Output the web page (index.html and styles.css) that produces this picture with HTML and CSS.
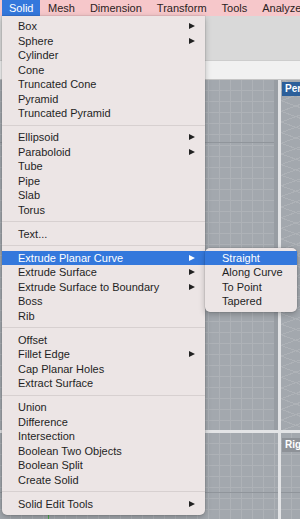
FILE: index.html
```html
<!DOCTYPE html>
<html lang="en">
<head>
  <meta charset="UTF-8" />
  <meta name="viewport" content="width=device-width, initial-scale=1" />
  <title>Solid menu</title>
  <link rel="stylesheet" href="styles.css">
</head>
<body>
  <div class="app">
    <div class="menubar">
      <span class="menu-title open">Solid</span>
      <span class="menu-title">Mesh</span>
      <span class="menu-title">Dimension</span>
      <span class="menu-title">Transform</span>
      <span class="menu-title">Tools</span>
      <span class="menu-title">Analyze</span>
    </div>
    <div class="toolbar"></div>
    <div class="tabstrip"></div>

    <div class="viewports">
      <div class="viewport flat"></div>
      <div class="viewport persp">
        <span class="vp-label active">Perspective</span>
      </div>
      <div class="viewport flat lower">
        <div class="axis-y"></div>
      </div>
      <div class="viewport flat lower">
        <span class="vp-label">Right</span>
      </div>
    </div>

    <div class="dropdown">
      <div class="item">Box<i class="arrow"></i></div>
      <div class="item">Sphere<i class="arrow"></i></div>
      <div class="item">Cylinder</div>
      <div class="item">Cone</div>
      <div class="item">Truncated Cone</div>
      <div class="item">Pyramid</div>
      <div class="item">Truncated Pyramid</div>
      <div class="sep"></div>
      <div class="item">Ellipsoid<i class="arrow"></i></div>
      <div class="item">Paraboloid<i class="arrow"></i></div>
      <div class="item">Tube</div>
      <div class="item">Pipe</div>
      <div class="item">Slab</div>
      <div class="item">Torus</div>
      <div class="sep"></div>
      <div class="item">Text...</div>
      <div class="sep"></div>
      <div class="item selected">Extrude Planar Curve<i class="arrow"></i>
        <div class="submenu">
          <div class="item selected">Straight</div>
          <div class="item">Along Curve</div>
          <div class="item">To Point</div>
          <div class="item">Tapered</div>
        </div>
      </div>
      <div class="item">Extrude Surface<i class="arrow"></i></div>
      <div class="item">Extrude Surface to Boundary<i class="arrow"></i></div>
      <div class="item">Boss</div>
      <div class="item">Rib</div>
      <div class="sep"></div>
      <div class="item">Offset</div>
      <div class="item">Fillet Edge<i class="arrow"></i></div>
      <div class="item">Cap Planar Holes</div>
      <div class="item">Extract Surface</div>
      <div class="sep"></div>
      <div class="item">Union</div>
      <div class="item">Difference</div>
      <div class="item">Intersection</div>
      <div class="item">Boolean Two Objects</div>
      <div class="item">Boolean Split</div>
      <div class="item">Create Solid</div>
      <div class="sep"></div>
      <div class="item">Solid Edit Tools<i class="arrow"></i></div>
    </div>
  </div>
</body>
</html>
```

FILE: styles.css
```css
html, body {
  margin: 0;
  padding: 0;
  height: 100%;
  overflow: hidden;
  font-family: "Liberation Sans", Arial, sans-serif;
  font-size: 11px;
  color: #1f1f1f;
  background: #dadada;
}

.app {
  position: relative;
  display: flex;
  flex-direction: column;
  width: 300px;
  height: 519px;
  overflow: hidden;
}

.menubar {
  display: flex;
  height: 16px;
  line-height: 16px;
  padding-left: 2px;
  background: #f6c7ca;
  white-space: nowrap;
  flex-shrink: 0;
}

.menu-title {
  padding: 0 7.5px 0 7.5px;
  color: #2a2222;
}

.menu-title.open {
  padding: 0 7px;
  background: #3478dc;
  color: #fff;
}

.toolbar {
  height: 44px;
  background: #d9d9d9;
  border-bottom: 1px solid #cdcdcd;
  flex-shrink: 0;
}

.tabstrip {
  height: 18px;
  background: #f1f1f1;
  border-bottom: 1px solid #c4c4c4;
  flex-shrink: 0;
}

.viewports {
  flex: 1;
  display: grid;
  grid-template-columns: 278px 1fr;
  grid-template-rows: 350px 1fr;
  gap: 3px;
  background: #e3e4e6;
}

.viewport {
  position: relative;
  overflow: hidden;
  background-color: #a3a8ae;
}

.viewport.flat {
  background-image:
    linear-gradient(to bottom, transparent 62px, #90959b 62px, #90959b 63px, transparent 63px),
    repeating-linear-gradient(to right, transparent 0, transparent 10px, #aeb2b7 10px, #aeb2b7 11px),
    repeating-linear-gradient(to bottom, transparent 0, transparent 10px, #aeb2b7 10px, #aeb2b7 11px);
}

.viewport.flat:first-child {
  border-right: 4px solid #989da3;
}

.viewport.lower {
  background-image:
    linear-gradient(to bottom, transparent 59px, #90959b 59px, #90959b 60px, transparent 60px),
    repeating-linear-gradient(to right, transparent 0, transparent 10px, #aeb2b7 10px, #aeb2b7 11px),
    repeating-linear-gradient(to bottom, transparent 0, transparent 10px, #aeb2b7 10px, #aeb2b7 11px);
}

.viewport.persp {
  background-image:
    repeating-linear-gradient(160deg, transparent 0, transparent 9px, #aeb2b7 9px, #aeb2b7 10px),
    repeating-linear-gradient(20deg, transparent 0, transparent 9px, #aeb2b7 9px, #aeb2b7 10px);
}

.axis-y {
  position: absolute;
  left: 48px;
  top: 0;
  bottom: 0;
  width: 1px;
  background: #4cae4c;
}

.vp-label {
  position: absolute;
  top: 2px;
  left: 1px;
  padding: 0 3px;
  height: 14px;
  line-height: 14px;
  font-size: 10px;
  font-weight: bold;
  color: #fff;
  background: #8e9298;
  white-space: nowrap;
}

.vp-label.active {
  background: #2c5f9a;
}

.viewport.lower .vp-label {
  top: 5px;
}

.dropdown {
  position: absolute;
  top: 16px;
  left: 2px;
  width: 203px;
  padding: 3px 0 4px;
  background: #ece5e5;
  border-radius: 0 0 5px 5px;
  box-shadow: 0 2px 6px rgba(0, 0, 0, 0.25), 0 0 0 0.5px rgba(0, 0, 0, 0.12);
  box-sizing: border-box;
}

.item {
  position: relative;
  display: flex;
  align-items: center;
  justify-content: space-between;
  height: 14.5px;
  line-height: 14.5px;
  padding: 0 10px 0 16px;
  white-space: nowrap;
  color: #1f1f1f;
}

.item.selected {
  background: #3478dc;
  color: #fff;
}

.arrow {
  display: block;
  width: 0;
  height: 0;
  border-left: 6px solid #222;
  border-top: 3.5px solid transparent;
  border-bottom: 3.5px solid transparent;
}

.item.selected .arrow {
  border-left-color: #fff;
}

.sep {
  height: 1px;
  margin: 4.25px 0;
  background: #d7d0d0;
}

.submenu {
  position: absolute;
  top: -3px;
  left: 100%;
  width: 92px;
  padding: 3px 0;
  background: #ece5e5;
  border-radius: 5px;
  box-shadow: 0 2px 6px rgba(0, 0, 0, 0.25), 0 0 0 0.5px rgba(0, 0, 0, 0.12);
  color: #1f1f1f;
}

.submenu .item {
  padding-left: 17px;
}
```
